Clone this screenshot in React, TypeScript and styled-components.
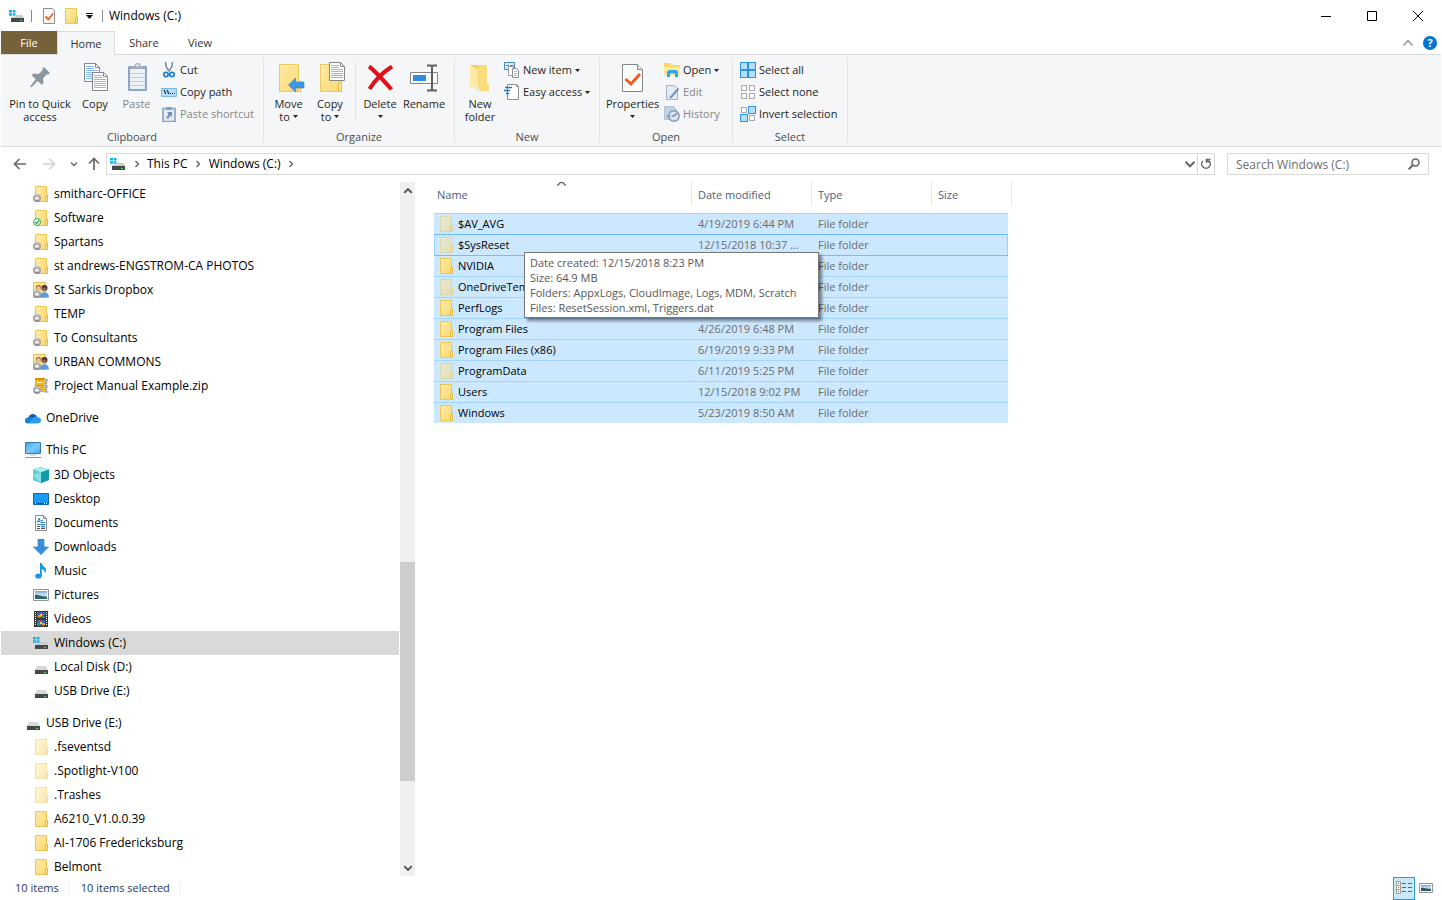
import React from 'react';
import styled, { createGlobalStyle, css } from 'styled-components';

const GlobalStyle = createGlobalStyle`
  * { box-sizing: border-box; }
  html, body, #root { height: 100%; }
  body {
    margin: 0;
    background: #fff;
    color: #000;
    font: 12px/16px "Open Sans", "Noto Sans", sans-serif;
    overflow: hidden;
  }
  button, input { font: inherit; color: inherit; }
  button { background: none; border: 0; padding: 0; margin: 0; }
  a { color: inherit; text-decoration: none; }
  ul { list-style: none; margin: 0; padding: 0; }
  svg { display: block; flex: none; }
`;

/* ---------- shared drawings ---------- */

const HiddenDefs = styled.svg`
  position: absolute;
`;

const Gradients = () => (
  <HiddenDefs width="0" height="0" aria-hidden="true">
    <defs>
      <linearGradient id="folder" x1="0" y1="0" x2="1" y2="1">
        <stop offset="0" stopColor="#ffeba6" />
        <stop offset="1" stopColor="#fbd971" />
      </linearGradient>
      <linearGradient id="screen" x1="0" y1="0" x2="1" y2="1">
        <stop offset="0" stopColor="#3ea3ee" />
        <stop offset="0.5" stopColor="#7ccbfa" />
        <stop offset="1" stopColor="#3fa9f2" />
      </linearGradient>
      <linearGradient id="badge" x1="0" y1="0" x2="0" y2="1">
        <stop offset="0" stopColor="#c4c4c4" />
        <stop offset="1" stopColor="#8a8a8a" />
      </linearGradient>
      <linearGradient id="photo" x1="0" y1="0" x2="0" y2="1">
        <stop offset="0" stopColor="#6fa8dc" />
        <stop offset="0.5" stopColor="#d5e8f5" />
        <stop offset="1" stopColor="#3f7f83" />
      </linearGradient>
    </defs>
  </HiddenDefs>
);

const Svg = ({ s = 16, children }: { s?: number; children: React.ReactNode }) => (
  <svg width={s} height={s} viewBox={`0 0 ${s} ${s}`} fill="none" aria-hidden="true">
    {children}
  </svg>
);

const FolderShape = ({ faded }: { faded?: boolean }) => (
  <g opacity={faded ? 0.5 : 1}>
    <path d="M2.500 .5h11v15h-11z" fill="url(#folder)" stroke="#ecc755" />
    <path d="M12.500 15.500v-5l2-1.500v6.500z" fill="#ffe795" stroke="#e3b93f" />
  </g>
);

const CloudBadge = () => (
  <g>
    <circle cx="4" cy="12" r="4" fill="url(#badge)" />
    <path d="M2.500 13.500h3a.8.8 0 0 0 0-1.600 1.500 1.500 0 0 0-2.900 0 .8.8 0 0 0-.1 1.600z" fill="#fff" />
  </g>
);

type IconName =
  | 'folder' | 'fadedFolder' | 'cloudFolder' | 'syncedFolder' | 'sharedFolder' | 'zip' | 'onedrive'
  | 'pc' | 'cube' | 'desktop' | 'document' | 'download' | 'music' | 'picture' | 'video' | 'winDrive' | 'drive'
  | 'cut' | 'copyPath' | 'pasteShortcut' | 'newItem' | 'easyAccess' | 'open' | 'edit' | 'history'
  | 'selectAll' | 'selectNone' | 'invert' | 'check' | 'details' | 'thumbs';

const Square = ({ x, y, on }: { x: number; y: number; on?: boolean }) => (
  <rect x={x + 0.5} y={y + 0.5} width={on ? 7 : 5} height={on ? 7 : 5} fill={on ? '#b5defb' : '#fff'} stroke={on ? '#2a93e6' : '#a5a7aa'} />
);

const drawings: Record<IconName, React.ReactNode> = {
  folder: <FolderShape />,
  fadedFolder: <FolderShape faded />,
  cloudFolder: <><FolderShape /><CloudBadge /></>,
  syncedFolder: (
    <>
      <FolderShape />
      <circle cx="4" cy="12" r="3.500" fill="#fff" stroke="#27a844" />
      <path d="M2 12l1.500 1.500L6 10.500" stroke="#27a844" strokeWidth="1.300" />
    </>
  ),
  sharedFolder: (
    <>
      <path d="M.5 .5h12v15H.5z" fill="url(#folder)" stroke="#e3c15a" />
      <circle cx="5.500" cy="5.500" r="2.800" fill="#a98752" />
      <circle cx="5.500" cy="6.500" r="2" fill="#e6c49c" />
      <path d="M1 15c0-6 9-6 9 0z" fill="#9fb98a" />
      <circle cx="11.500" cy="6" r="3" fill="#4a3325" />
      <circle cx="11.300" cy="7.300" r="2" fill="#9a6748" />
      <path d="M7 15.500c0-7 9-7 9 0z" fill="#5b9be0" />
      <CloudBadge />
    </>
  ),
  zip: (
    <>
      <path d="M2 0h10v14H2z" fill="#f5b81c" />
      <path d="M2 0h10v2H2zM2 7h10v1H2z" fill="#d78f00" />
      <path d="M4 4h5v1H4z" fill="#fff3c0" />
      <path d="M11 1h4v3h-1v3h1v3h-1v2l2 3h-5l1-3V9h-1V6h1V4h-1z" fill="#c3c6c9" />
      <path d="M13 1v13" stroke="#6e7173" strokeDasharray="1 1" />
      <CloudBadge />
    </>
  ),
  onedrive: (
    <>
      <path d="M3.500 8A4.500 4.500 0 0 1 12 6.500L8 11H1.500z" fill="#0f5eb5" />
      <path d="M1 13a3.200 3.200 0 0 1 1.500-5.600c2.500-.8 4 0 5 1l4.500 4.800H3.500A3 3 0 0 1 1 13z" fill="#1683d8" />
      <path d="M7 9c2-3 5-3 6-1.800 2 .2 3 1.500 3 3a3 3 0 0 1-3 3H4z" fill="#2a9ff0" />
    </>
  ),
  pc: (
    <>
      <path d="M.5 .5h15v11H.5z" fill="url(#screen)" stroke="#2f7db6" />
      <path d="M5 13h6" stroke="#b5c4cf" />
      <path d="M0 15.500h16" stroke="#7e95a6" />
    </>
  ),
  cube: (
    <>
      <path d="M8 0l8 2.500v10.500L8 16 0 13V2.500z" fill="#34bccb" />
      <path d="M8 0l8 2.500L8 5.500 0 2.500z" fill="#a8ebf0" />
      <path d="M0 2.500l8 3V16l-8-3z" fill="#5ed2db" />
      <path d="M8 5.500l8-3V13l-8 3z" fill="#109aac" />
      <path d="M0 8l8-2.500V16z" fill="#b7f0f2" opacity=".5" />
    </>
  ),
  desktop: (
    <>
      <path d="M.5 2.500h15v11H.5z" fill="#1b9bf5" stroke="#0f69b4" />
      <path d="M1 12.500h14" stroke="#0b4f92" />
      <path d="M2 12.500h1M11 12.500h1M13 12.500h1" stroke="#fff" />
    </>
  ),
  document: (
    <>
      <path d="M2.500 .5h8l3 3v12h-11z" fill="#fff" stroke="#8b8e91" />
      <path d="M10.500 .5v3h3" stroke="#8b8e91" />
      <path d="M4 7.500L6 3l1.500 4.500M5 6.500h2M8 5.500h2M8 7.500h4M4 9.500h8" stroke="#2b88c9" />
      <path d="M4 11.500h3M4 13.500h3M8 13.500h4" stroke="#55585b" />
      <path d="M8 10.500h4v2H8z" fill="#4a9ad4" />
    </>
  ),
  download: <path d="M5 0h6v8h4.500L8 15.700.5 8H5z" fill="#378fe0" stroke="#2f7fcc" strokeWidth=".6" />,
  music: (
    <>
      <ellipse cx="5.500" cy="13" rx="3.300" ry="2.600" fill="#1796ee" />
      <path d="M7 0h1.800c.2 3 4.200 4 4.200 7 0 1.500-.7 2.500-1.400 3.500.3-3-1.200-4-2.800-4.500v7H7z" fill="#1796ee" />
    </>
  ),
  picture: (
    <>
      <path d="M.5 2.500h15v11H.5z" fill="#fff" stroke="#8f9498" />
      <path d="M2 4h12v8H2z" fill="url(#photo)" />
      <path d="M2 8c3-1 6 2 12 2v2H2z" fill="#2f6468" />
    </>
  ),
  video: (
    <>
      <path d="M1 0h14v16H1z" fill="#36383b" />
      <path d="M4 1h8v6H4z" fill="#3566b5" />
      <path d="M4 9h8v6H4z" fill="#3566b5" />
      <path d="M5 4h3v2H5zM9 12h3v2H9z" fill="#e8a52e" />
      <path d="M8 2h3v2H8zM6 9h2v2H6z" fill="#d94d33" />
      <path d="M9 5h2v2H9zM4 12h3v2H4z" fill="#3c9b52" />
      <path d="M7 3h2v2H7zM7 11h2v2H7z" fill="#f0d050" />
      <path d="M2.500 1v14M13.500 1v14" stroke="#fff" strokeDasharray="1 1" />
    </>
  ),
  winDrive: (
    <>
      <path d="M0 2h3v2.500H0zM3.700 2h2.800v2.500H3.700zM0 5.200h3v2.500H0zM3.700 5.200h2.800v2.500H3.700z" fill="#13b2ec" />
      <path d="M7 7h6.500l1.500 3H2l1-1.500h4z" fill="#c9cbcc" />
      <path d="M2 10h13v4H2z" fill="#46484a" />
      <path d="M11 12h2v1h-2z" fill="#3ee04a" />
    </>
  ),
  drive: (
    <>
      <path d="M4 7h9l2 4H2z" fill="#d6d7d8" />
      <path d="M2 11h13v4H2z" fill="#46484a" />
      <path d="M11 13h2v1h-2z" fill="#3ee04a" />
    </>
  ),
  cut: (
    <>
      <path d="M4.500 0c0 4 1.500 7 4 9.500M11.500 0c0 4-1.500 7-4 9.500" stroke="#7d8790" strokeWidth="1.500" />
      <circle cx="5" cy="12.500" r="2.200" stroke="#1c7fd0" strokeWidth="1.700" />
      <circle cx="11" cy="12.500" r="2.200" stroke="#1c7fd0" strokeWidth="1.700" />
    </>
  ),
  copyPath: (
    <>
      <path d="M.5 4.500h15v8H.5z" fill="#b4def9" stroke="#7ab8e2" />
      <path d="M3 6l2 4M6 6l2 4" stroke="#17395c" strokeWidth="1.200" />
      <path d="M9 9.500h1M11 9.500h1M13 9.500h1" stroke="#17395c" />
    </>
  ),
  pasteShortcut: (
    <>
      <path d="M2 2.500h12v13H2z" fill="#e3eaf4" stroke="#8ba1c2" strokeWidth="1.600" />
      <path d="M5 1h6v3H5z" fill="#8ba1c2" />
      <path d="M6 6h5v5L9.300 9.300 7 13l-1.500-1 2-4.500z" fill="#6f8ab5" />
    </>
  ),
  newItem: (
    <>
      <path d="M.5 .5h10v7H.5z" fill="#d8ecfa" stroke="#3d87bd" />
      <path d="M2 3.500h3M6 3.500h3" stroke="#3d87bd" />
      <path d="M4.500 4.500h5v9h-5z" fill="#fff" stroke="#9a9da0" />
      <path d="M8.500 6.500h4l2 2v7h-6z" fill="#fff" stroke="#8b8e91" />
      <path d="M10 9.500h3M10 11.500h3M10 13.500h3" stroke="#e3a4a4" />
    </>
  ),
  easyAccess: (
    <>
      <path d="M3.500 .5h9l2 2v13h-11z" fill="#fff" stroke="#8b8e91" />
      <path d="M12.500 .5v2h2" stroke="#8b8e91" />
      <path d="M1 3.500h7M0 6.500h6M2 9.500h3" stroke="#2477b3" strokeWidth="1.400" />
    </>
  ),
  open: (
    <>
      <path d="M0 1h6l1 2h9v11H0z" fill="#fbd864" />
      <path d="M0 5h16v9H0z" fill="#ffe9a0" />
      <path d="M3 15V9.500L5 8h7l2 1.500V15h-3v-3.500H6V15z" fill="#2fa9e4" />
    </>
  ),
  edit: (
    <>
      <path d="M2.500 1.500h8l3 3v11h-11z" fill="#e4ebf5" stroke="#a3b3cc" />
      <path d="M14.500 4.500L8 12l-2 2" stroke="#7f95b8" strokeWidth="2.200" />
    </>
  ),
  history: (
    <>
      <path d="M.5 .5h9l3 3v10H.5z" fill="#c5d2e5" stroke="#b1c1d8" />
      <circle cx="10" cy="10" r="5.200" fill="#dde5f1" stroke="#8197bb" strokeWidth="1.400" />
      <path d="M10 10l3-3M10 10H7.500" stroke="#6e86ae" strokeWidth="1.400" />
      <path d="M2 9.500l2.500 3 2-3z" fill="#8197bb" />
    </>
  ),
  selectAll: <><Square x={0} y={0} on /><Square x={8} y={0} on /><Square x={0} y={8} on /><Square x={8} y={8} on /></>,
  selectNone: <><Square x={1} y={1} /><Square x={9} y={1} /><Square x={1} y={9} /><Square x={9} y={9} /></>,
  invert: <><Square x={1} y={1} /><Square x={8} y={0} on /><Square x={0} y={8} on /><Square x={9} y={9} /></>,
  check: (
    <>
      <path d="M2.500 .5h9l2 2v13h-11z" fill="#fbfbfb" stroke="#8b8e91" />
      <path d="M4.500 8.500l3 3 4.500-6" stroke="#f05a1c" strokeWidth="1.800" />
    </>
  ),
  details: (
    <>
      <path d="M.5 1.500h4v12h-4zM.5 5.500h4M.5 9.500h4" fill="#fff" stroke="#a09a94" />
      <path d="M2 3.500h1M2 7.500h1" stroke="#2f7d6d" />
      <path d="M2 11.500h1" stroke="#d02525" />
      <path d="M6 3.500h4M12 3.500h4M6 7.500h4M12 7.500h4M6 11.500h4M12 11.500h4" stroke="#5b6670" />
    </>
  ),
  thumbs: (
    <>
      <path d="M1.500 3.500h13v9h-13z" fill="#fff" stroke="#8f9498" />
      <path d="M3 5h10v6H3z" fill="url(#photo)" />
      <path d="M3 8c3-1 5 1 10 1v2H3z" fill="#2b5963" />
    </>
  ),
};

const Icon = ({ name }: { name: IconName }) => <Svg>{drawings[name]}</Svg>;

const page = (x: number, y: number) => (
  <g transform={`translate(${x} ${y})`}>
    <path d="M.5 .5h11l4 4v14H.5z" fill="#fff" stroke="#85888b" />
    <path d="M11.500 .5v4h4" stroke="#85888b" />
    <path d="M2 3.500h8M2 5.500h8M2 7.500h12M2 9.500h12M2 11.500h12M2 13.500h12M2 15.500h12" stroke="#86b9ee" />
  </g>
);

const PinIcon = () => (
  <Svg s={32}>
    <path d="M20 5l6 6-1.500 1.500-1.500-.3-4 4 .5 5-1.800 1.600-4-3.800L7.500 25.300 6 24.500l5.700-7.300-4-4 1.800-1.700 5.300.5 4-4-.4-1.500z" fill="#8b979f" />
  </Svg>
);

const CopyIcon = () => (
  <Svg s={32}>
    <g transform="translate(5 1)">{page(0, 0)}{page(8, 9)}</g>
  </Svg>
);

const PasteIcon = () => (
  <Svg s={32}>
    <path d="M8 4h17a1 1 0 0 1 1 1v23a1 1 0 0 1-1 1H8a1 1 0 0 1-1-1V5a1 1 0 0 1 1-1z" fill="#8ea4c8" />
    <path d="M9 7h15v20H9z" fill="#edf2f9" />
    <path d="M9 11.500h15M9 15.500h15M9 19.500h15M9 23.500h15" stroke="#c3cfe1" />
    <path d="M11 7V4h2.500a3 3 0 0 1 6 0H22v3z" fill="#a3aebd" />
    <circle cx="16.500" cy="3.500" r="1.200" fill="#f5f6f7" />
  </Svg>
);

const BigFolder = () => (
  <>
    <path d="M6.500 2.500h19v18l2 2v7h-21z" fill="url(#folder)" stroke="#eccb62" />
    <path d="M24.500 29.500v-8l3-2v10z" fill="#ffe694" stroke="#e5bc45" />
  </>
);

const MoveIcon = () => (
  <Svg s={32}>
    <BigFolder />
    <path d="M15.500 23l7-7v4H31v6h-8.500v4z" fill="#3e97e3" stroke="#2f80cb" strokeWidth=".6" />
  </Svg>
);

const CopyToIcon = () => (
  <Svg s={32}>
    <BigFolder />
    {page(15, 0)}
  </Svg>
);

const DeleteIcon = () => (
  <Svg s={32}>
    <path d="M5 4.500C9 7 22 21 27.500 27.500M28 4.500C21 9 11 18 5.500 27" stroke="#e30f17" strokeWidth="4" />
  </Svg>
);

const RenameIcon = () => (
  <Svg s={32}>
    <path d="M2.500 10.500h27v11h-27z" fill="#fff" stroke="#85888b" />
    <path d="M5 13h13v6H5z" fill="#2e8fe2" />
    <path d="M19 3.500h4l1 1 1-1h4M24 4v24M19 28.500h4l1-1 1 1h4" stroke="#5d6063" strokeWidth="2" />
  </Svg>
);

const NewFolderIcon = () => (
  <Svg s={32}>
    <path d="M7 3h10l6 1v22h-8z" fill="#f3cf6b" />
    <path d="M14 3h9v18l2 2v6h-10z" fill="#fbdc7c" />
    <path d="M6 3l8 5v21l-8-5z" fill="#ffeaa5" />
  </Svg>
);

const PropertiesIcon = () => (
  <Svg s={32}>
    <path d="M5.500 2.500h15l5 5v22h-20z" fill="#fafbfc" stroke="#85888b" />
    <path d="M20.500 2.500v5h5" fill="#e6e8ea" stroke="#85888b" />
    <path d="M8.500 17l5.500 5 9-10" stroke="#f25c1b" strokeWidth="3" />
  </Svg>
);

const Caret = () => (
  <svg width="5" height="3" viewBox="0 0 5 3" aria-hidden="true"><path d="M0 0h5L2.500 3z" fill="#222" /></svg>
);

type Direction = 'up' | 'down' | 'right';
const turns: Record<Direction, number> = { right: 0, down: 90, up: 270 };
const Chevron = ({ to, color = '#666', size = 8, weight = 1.4 }: { to: Direction; color?: string; size?: number; weight?: number }) => (
  <svg width={size} height={size} viewBox="0 0 8 8" fill="none" aria-hidden="true">
    <path d="M2.500 1l3 3-3 3" stroke={color} strokeWidth={weight} transform={`rotate(${turns[to]} 4 4)`} />
  </svg>
);

const Arrow = ({ turn = 0 }: { turn?: number }) => (
  <svg width="14" height="14" viewBox="0 0 14 14" fill="none" stroke="currentColor" strokeWidth="1.700" aria-hidden="true">
    <path d="M13 7H1.500M6.500 2l-5 5 5 5" transform={`rotate(${turn} 7 7)`} />
  </svg>
);

/* ---------- window frame ---------- */

const Window = styled.div`
  height: 100vh;
  padding: 0 1px;
  display: flex;
  flex-direction: column;
  background: #fff;
`;

const TitleBar = styled.header`
  height: 31px;
  flex: none;
  display: flex;
  align-items: center;
  padding-left: 8px;
`;

const QuickButton = styled.button<{ $narrow?: boolean }>`
  width: ${(p) => (p.$narrow ? 14 : 22)}px;
  height: 22px;
  display: flex;
  align-items: center;
  justify-content: center;
`;

const Divider = styled.span`
  width: 1px;
  height: 12px;
  margin: 0 6px;
  background: #888;
`;

const Title = styled.h1`
  margin: 0;
  font-size: 12px;
  font-weight: 400;
  flex: 1;
`;

const WindowButton = styled.button`
  width: 46px;
  height: 31px;
  display: flex;
  align-items: center;
  justify-content: center;
`;

const TabBar = styled.div`
  height: 24px;
  flex: none;
  display: flex;
  border-bottom: 1px solid #dadbdc;
  font-size: 11px;
`;

const Tab = styled.button<{ $kind?: 'file' | 'active'; $width: number }>`
  width: ${(p) => p.$width}px;
  height: 24px;
  color: #333;
  ${(p) => p.$kind === 'file' && css`
    background: #75623a;
    color: #fff;
    height: 23px;
  `}
  ${(p) => p.$kind === 'active' && css`
    background: #f5f6f7;
    border: 1px solid #dadbdc;
    border-bottom: 0;
  `}
`;

const TabTools = styled.div`
  margin-left: auto;
  padding-right: 4px;
  display: flex;
  align-items: center;
  gap: 9px;
`;

const HelpButton = styled.button`
  width: 14px;
  height: 14px;
  border-radius: 7px;
  background: #0173d0;
  color: #fff;
  line-height: 14px;
  font-weight: 700;
`;

/* ---------- ribbon ---------- */

const Ribbon = styled.div`
  flex: none;
  height: 92px;
  display: flex;
  padding: 3px 0;
  background: #f5f6f7;
  border-bottom: 1px solid #dadbdc;
  color: #1e1e1e;
  font-size: 11px;
`;

const Group = styled.section<{ $width: number }>`
  width: ${(p) => p.$width}px;
  flex: none;
  display: flex;
  flex-direction: column;
  border-right: 1px solid #e2e3e4;
`;

const GroupTools = styled.div`
  flex: 1;
  display: flex;
  padding-left: 4px;
`;

const GroupName = styled.h2`
  margin: 0;
  height: 14px;
  font-size: 11px;
  font-weight: 400;
  line-height: 16px;
  text-align: center;
  color: #4b4d50;
`;

const LargeButton = styled.button<{ $width: number }>`
  width: ${(p) => p.$width}px;
  flex: none;
  padding-top: 4px;
  display: flex;
  flex-direction: column;
  align-items: center;
  line-height: 13px;
  white-space: nowrap;
  &:disabled { color: #85878a; }
`;

const LargeLabel = styled.span`
  margin-top: 3px;
`;

const CaretLine = styled.span`
  height: 13px;
  display: flex;
  align-items: center;
  justify-content: center;
  gap: 3px;
`;

const ToolDivider = styled.span`
  width: 1px;
  height: 58px;
  margin: 4px 3px 0 4px;
  background: #e2e3e4;
`;

const SmallTools = styled.div`
  display: flex;
  flex-direction: column;
  align-items: flex-start;
  padding-top: 1px;
`;

const SmallButton = styled.button`
  height: 22px;
  padding: 0 4px 0 3px;
  display: flex;
  align-items: center;
  gap: 3px;
  white-space: nowrap;
  &:disabled { color: #85878a; }
`;

interface LargeProps { width: number; icon: React.ReactNode; lines: string[]; caret?: boolean; disabled?: boolean }
const Large = ({ width, icon, lines, caret, disabled }: LargeProps) => (
  <LargeButton $width={width} disabled={disabled}>
    {icon}
    <LargeLabel>{lines[0]}</LargeLabel>
    {(lines[1] || caret) && <CaretLine>{lines[1]}{caret && <Caret />}</CaretLine>}
  </LargeButton>
);

interface SmallProps { icon: IconName; label: string; caret?: boolean; disabled?: boolean }
const Small = ({ icon, label, caret, disabled }: SmallProps) => (
  <SmallButton disabled={disabled}>
    <Icon name={icon} />
    {label}
    {caret && <Caret />}
  </SmallButton>
);

/* ---------- address row ---------- */

const AddressRow = styled.div`
  flex: none;
  height: 35px;
  padding: 6px 12px 7px 6px;
  display: flex;
`;

const NavButton = styled.button<{ $width: number }>`
  width: ${(p) => p.$width}px;
  display: flex;
  align-items: center;
  justify-content: center;
  color: #6a6a6a;
  &:disabled { color: #d4d4d4; }
`;

const AddressBox = styled.div`
  flex: 1;
  min-width: 0;
  display: flex;
  align-items: center;
  padding-left: 3px;
  border: 1px solid #d9d9d9;
`;

const Crumbs = styled.nav`
  flex: 1;
  min-width: 0;
  display: flex;
  align-items: center;
`;

const Crumb = styled.button`
  height: 20px;
  white-space: nowrap;
`;

const CrumbMark = styled.span`
  width: 21px;
  display: flex;
  justify-content: center;
`;

const BoxButton = styled.button<{ $ruled?: boolean }>`
  width: ${(p) => (p.$ruled ? 17 : 15)}px;
  height: 20px;
  display: flex;
  align-items: center;
  justify-content: center;
  border-left: ${(p) => (p.$ruled ? '1px solid #d9d9d9' : '0')};
`;

const SearchBox = styled.form`
  width: 202px;
  margin-left: 12px;
  display: flex;
  align-items: center;
  border: 1px solid #d9d9d9;
`;

const SearchInput = styled.input`
  flex: 1;
  min-width: 0;
  height: 20px;
  padding: 0 0 0 8px;
  border: 0;
  outline: 0;
  background: none;
  &::placeholder { color: #6d6d6d; opacity: 1; }
`;

const SearchButton = styled.button`
  width: 28px;
  height: 20px;
  display: flex;
  align-items: center;
  justify-content: center;
`;

/* ---------- folder tree ---------- */

const Body = styled.div`
  flex: 1;
  min-height: 0;
  display: flex;
`;

const Tree = styled.nav`
  width: 398px;
  flex: none;
  overflow: hidden;
  display: flex;
  flex-direction: column;
  gap: 8px;
`;

const Branch = styled.ul<{ $spaced?: boolean }>`
  padding-top: ${(p) => (p.$spaced ? 1 : 0)}px;
`;

const TreeLink = styled.a<{ $root?: boolean; $selected?: boolean }>`
  height: 24px;
  display: flex;
  align-items: center;
  gap: 5px;
  padding-left: ${(p) => (p.$root ? 24 : 32)}px;
  background: ${(p) => (p.$selected ? '#d9d9d9' : 'none')};
  white-space: nowrap;
`;

const ScrollBar = styled.div`
  width: 15px;
  flex: none;
  margin-left: 1px;
  display: flex;
  flex-direction: column;
  background: #f0f0f0;
`;

const ScrollButton = styled.button`
  height: 17px;
  flex: none;
  display: flex;
  align-items: center;
  justify-content: center;
`;

const ScrollPart = styled.div<{ $share: number; $thumb?: boolean }>`
  flex: ${(p) => p.$share} 1 0;
  background: ${(p) => (p.$thumb ? '#cdcdcd' : 'none')};
`;

interface Node { name: string; icon: IconName; selected?: boolean }
interface TreeGroup { root?: Node; items: Node[]; spaced?: boolean }

const tree: TreeGroup[] = [
  {
    items: [
      { name: 'smitharc-OFFICE', icon: 'cloudFolder' },
      { name: 'Software', icon: 'syncedFolder' },
      { name: 'Spartans', icon: 'cloudFolder' },
      { name: 'st andrews-ENGSTROM-CA PHOTOS', icon: 'cloudFolder' },
      { name: 'St Sarkis Dropbox', icon: 'sharedFolder' },
      { name: 'TEMP', icon: 'cloudFolder' },
      { name: 'To Consultants', icon: 'cloudFolder' },
      { name: 'URBAN COMMONS', icon: 'sharedFolder' },
      { name: 'Project Manual Example.zip', icon: 'zip' },
    ],
  },
  { root: { name: 'OneDrive', icon: 'onedrive' }, items: [] },
  {
    root: { name: 'This PC', icon: 'pc' },
    spaced: true,
    items: [
      { name: '3D Objects', icon: 'cube' },
      { name: 'Desktop', icon: 'desktop' },
      { name: 'Documents', icon: 'document' },
      { name: 'Downloads', icon: 'download' },
      { name: 'Music', icon: 'music' },
      { name: 'Pictures', icon: 'picture' },
      { name: 'Videos', icon: 'video' },
      { name: 'Windows (C:)', icon: 'winDrive', selected: true },
      { name: 'Local Disk (D:)', icon: 'drive' },
      { name: 'USB Drive (E:)', icon: 'drive' },
    ],
  },
  {
    root: { name: 'USB Drive (E:)', icon: 'drive' },
    items: [
      { name: '.fseventsd', icon: 'fadedFolder' },
      { name: '.Spotlight-V100', icon: 'fadedFolder' },
      { name: '.Trashes', icon: 'fadedFolder' },
      { name: 'A6210_V1.0.0.39', icon: 'folder' },
      { name: 'AI-1706 Fredericksburg', icon: 'folder' },
      { name: 'Belmont', icon: 'folder' },
    ],
  },
];

/* ---------- file list ---------- */

const Files = styled.main`
  flex: 1;
  min-width: 0;
  padding-left: 19px;
  overflow: hidden;
`;

const FileTable = styled.table`
  display: block;
  border-spacing: 0;
  font-size: 11px;
`;

const HeadRow = styled.tr`
  display: grid;
  grid-template-columns: 258px 120px 120px 80px;
  width: 578px;
  margin-bottom: 7px;
`;

const HeadCell = styled.th`
  position: relative;
  height: 24px;
  padding: 5px 0 0 6px;
  border-right: 1px solid #e5e5e5;
  font-weight: 400;
  text-align: left;
  color: #4c607a;
  &:first-child { padding-left: 3px; }
`;

const SortMark = styled.span`
  position: absolute;
  top: -4px;
  left: 50%;
  margin-left: -7px;
`;

const FileRow = styled.tr<{ $focused?: boolean }>`
  position: relative;
  display: grid;
  grid-template-columns: 258px 120px 120px 76px;
  width: 574px;
  height: 21px;
  background: #cce8ff;
  box-shadow: inset 0 1px #a3d5ff;
  ${(p) => p.$focused && css`
    box-shadow: inset 0 1px #73bbfa, inset 1px 0 #99d1ff, inset -1px 0 #99d1ff, 0 1px #73bbfa;
    z-index: 1;
  `}
`;

const FileCell = styled.td`
  padding: 3px 0 0 6px;
  line-height: 16px;
  white-space: nowrap;
  color: #6d6d6d;
`;

const NameCell = styled(FileCell)`
  display: flex;
  align-items: center;
  gap: 4px;
  padding: 1px 0 0 4px;
  color: #000;
`;

const Tooltip = styled.div`
  position: absolute;
  left: 90px;
  top: 18px;
  min-width: 295px;
  padding: 2px 8px 2px 5px;
  background: #fff;
  border: 1px solid #767676;
  box-shadow: 3px 3px 3px rgba(0, 0, 0, 0.45);
  color: #575757;
  line-height: 15px;
`;

interface FileItem { name: string; date: string; faded?: boolean; tip?: string[] }
const files: FileItem[] = [
  { name: '$AV_AVG', date: '4/19/2019 6:44 PM', faded: true },
  {
    name: '$SysReset',
    date: '12/15/2018 10:37 ...',
    faded: true,
    tip: [
      'Date created: 12/15/2018 8:23 PM',
      'Size: 64.9 MB',
      'Folders: AppxLogs, CloudImage, Logs, MDM, Scratch',
      'Files: ResetSession.xml, Triggers.dat',
    ],
  },
  { name: 'NVIDIA', date: '' },
  { name: 'OneDriveTemp', date: '', faded: true },
  { name: 'PerfLogs', date: '' },
  { name: 'Program Files', date: '4/26/2019 6:48 PM' },
  { name: 'Program Files (x86)', date: '6/19/2019 9:33 PM' },
  { name: 'ProgramData', date: '6/11/2019 5:25 PM', faded: true },
  { name: 'Users', date: '12/15/2018 9:02 PM' },
  { name: 'Windows', date: '5/23/2019 8:50 AM' },
];

/* ---------- status bar ---------- */

const StatusBar = styled.footer`
  flex: none;
  height: 24px;
  display: flex;
  align-items: center;
  padding: 0 4px 0 14px;
  color: #1e395b;
  font-size: 11px;
`;

const StatusText = styled.span`
  padding-right: 10px;
  margin-right: 11px;
  border-right: 1px solid #f4f4f4;
`;

const Views = styled.div`
  margin-left: auto;
  display: flex;
`;

const ViewButton = styled.button<{ $on?: boolean }>`
  width: 22px;
  height: 23px;
  display: flex;
  align-items: center;
  justify-content: center;
  border: 1px solid ${(p) => (p.$on ? '#26a0da' : 'transparent')};
  background: ${(p) => (p.$on ? '#cbe8f6' : 'none')};
`;

export default function App() {
  return (
    <Window>
      <GlobalStyle />
      <Gradients />

      <TitleBar>
        <Icon name="winDrive" />
        <Divider />
        <QuickButton aria-label="Properties"><Icon name="check" /></QuickButton>
        <QuickButton aria-label="New folder"><Icon name="folder" /></QuickButton>
        <QuickButton $narrow aria-label="Customize Quick Access Toolbar">
          <svg width="7" height="6" viewBox="0 0 7 6" aria-hidden="true"><path d="M0 0h7v1H0zM0 2h7L3.500 6z" fill="#111" /></svg>
        </QuickButton>
        <Divider />
        <Title>Windows (C:)</Title>
        <WindowButton aria-label="Minimize">
          <svg width="10" height="10" stroke="#000" fill="none"><path d="M0 5.500h10" /></svg>
        </WindowButton>
        <WindowButton aria-label="Maximize">
          <svg width="10" height="10" stroke="#000" fill="none"><path d="M.5 .5h9v9h-9z" /></svg>
        </WindowButton>
        <WindowButton aria-label="Close">
          <svg width="10" height="10" stroke="#000" fill="none"><path d="M0 0l10 10M10 0L0 10" /></svg>
        </WindowButton>
      </TitleBar>

      <TabBar>
        <Tab $kind="file" $width={56}>File</Tab>
        <Tab $kind="active" $width={58}>Home</Tab>
        <Tab $width={58}>Share</Tab>
        <Tab $width={54}>View</Tab>
        <TabTools>
          <button aria-label="Minimize the Ribbon"><Chevron to="up" color="#8a8a8a" size={12} weight={0.9} /></button>
          <HelpButton aria-label="Help">?</HelpButton>
        </TabTools>
      </TabBar>

      <Ribbon>
        <Group $width={263}>
          <GroupTools>
            <Large width={70} icon={<PinIcon />} lines={['Pin to Quick', 'access']} />
            <Large width={40} icon={<CopyIcon />} lines={['Copy']} />
            <Large width={43} icon={<PasteIcon />} lines={['Paste']} disabled />
            <SmallTools>
              <Small icon="cut" label="Cut" />
              <Small icon="copyPath" label="Copy path" />
              <Small icon="pasteShortcut" label="Paste shortcut" disabled />
            </SmallTools>
          </GroupTools>
          <GroupName>Clipboard</GroupName>
        </Group>
        <Group $width={191}>
          <GroupTools>
            <Large width={41} icon={<MoveIcon />} lines={['Move', 'to']} caret />
            <Large width={42} icon={<CopyToIcon />} lines={['Copy', 'to']} caret />
            <ToolDivider />
            <Large width={42} icon={<DeleteIcon />} lines={['Delete']} caret />
            <Large width={46} icon={<RenameIcon />} lines={['Rename']} />
          </GroupTools>
          <GroupName>Organize</GroupName>
        </Group>
        <Group $width={145}>
          <GroupTools>
            <Large width={42} icon={<NewFolderIcon />} lines={['New', 'folder']} />
            <SmallTools>
              <Small icon="newItem" label="New item" caret />
              <Small icon="easyAccess" label="Easy access" caret />
            </SmallTools>
          </GroupTools>
          <GroupName>New</GroupName>
        </Group>
        <Group $width={133}>
          <GroupTools>
            <Large width={57} icon={<PropertiesIcon />} lines={['Properties']} caret />
            <SmallTools>
              <Small icon="open" label="Open" caret />
              <Small icon="edit" label="Edit" disabled />
              <Small icon="history" label="History" disabled />
            </SmallTools>
          </GroupTools>
          <GroupName>Open</GroupName>
        </Group>
        <Group $width={115}>
          <GroupTools>
            <SmallTools>
              <Small icon="selectAll" label="Select all" />
              <Small icon="selectNone" label="Select none" />
              <Small icon="invert" label="Invert selection" />
            </SmallTools>
          </GroupTools>
          <GroupName>Select</GroupName>
        </Group>
      </Ribbon>

      <AddressRow>
        <NavButton $width={26} aria-label="Back"><Arrow /></NavButton>
        <NavButton $width={32} disabled aria-label="Forward"><Arrow turn={180} /></NavButton>
        <NavButton $width={17} aria-label="Recent locations"><Chevron to="down" /></NavButton>
        <NavButton $width={24} aria-label="Up"><Arrow turn={90} /></NavButton>
        <AddressBox>
          <Crumbs aria-label="Address">
            <Icon name="winDrive" />
            <CrumbMark><Chevron to="right" /></CrumbMark>
            <Crumb>This PC</Crumb>
            <CrumbMark><Chevron to="right" /></CrumbMark>
            <Crumb>Windows (C:)</Crumb>
            <CrumbMark><Chevron to="right" /></CrumbMark>
          </Crumbs>
          <BoxButton aria-label="Previous locations"><Chevron to="down" size={12} weight={1.3} /></BoxButton>
          <BoxButton $ruled aria-label="Refresh">
            <svg width="12" height="12" viewBox="0 0 12 12" fill="none" stroke="#666" strokeWidth="1.500" aria-hidden="true">
              <path d="M2.800 3a4.300 4.300 0 1 0 6.400 0M6.500 5V1.500h4M6.500 1.500l3 3" />
            </svg>
          </BoxButton>
        </AddressBox>
        <SearchBox role="search">
          <SearchInput type="search" aria-label="Search Windows (C:)" placeholder="Search Windows (C:)" />
          <SearchButton type="button" aria-label="Search">
            <svg width="12" height="12" viewBox="0 0 12 12" fill="none" stroke="#666" strokeWidth="1.500" aria-hidden="true">
              <circle cx="7.500" cy="4.500" r="3.500" />
              <path d="M5 7L.7 11.300" strokeWidth="2" />
            </svg>
          </SearchButton>
        </SearchBox>
      </AddressRow>

      <Body>
        <Tree aria-label="Folders">
          {tree.map((group, g) => (
            <div key={g}>
              {group.root && <TreeLink href="#" $root><Icon name={group.root.icon} />{group.root.name}</TreeLink>}
              {group.items.length > 0 && (
                <Branch $spaced={group.spaced}>
                  {group.items.map((item) => (
                    <li key={item.name}>
                      <TreeLink href="#" $selected={item.selected}><Icon name={item.icon} />{item.name}</TreeLink>
                    </li>
                  ))}
                </Branch>
              )}
            </div>
          ))}
        </Tree>
        <ScrollBar>
          <ScrollButton aria-label="Scroll up"><Chevron to="up" color="#505050" size={10} weight={1.5} /></ScrollButton>
          <ScrollPart $share={364} />
          <ScrollPart $share={219} $thumb />
          <ScrollPart $share={78} />
          <ScrollButton aria-label="Scroll down"><Chevron to="down" color="#505050" size={10} weight={1.5} /></ScrollButton>
        </ScrollBar>

        <Files>
          <FileTable>
            <thead>
              <HeadRow>
                <HeadCell>Name<SortMark><Chevron to="up" color="#555" size={11} weight={0.9} /></SortMark></HeadCell>
                <HeadCell>Date modified</HeadCell>
                <HeadCell>Type</HeadCell>
                <HeadCell>Size</HeadCell>
              </HeadRow>
            </thead>
            <tbody>
              {files.map((file) => (
                <FileRow key={file.name} $focused={!!file.tip}>
                  <NameCell>
                    <Icon name={file.faded ? 'fadedFolder' : 'folder'} />
                    {file.name}
                    {file.tip && <Tooltip role="tooltip">{file.tip.map((line) => <div key={line}>{line}</div>)}</Tooltip>}
                  </NameCell>
                  <FileCell>{file.date}</FileCell>
                  <FileCell>File folder</FileCell>
                  <FileCell />
                </FileRow>
              ))}
            </tbody>
          </FileTable>
        </Files>
      </Body>

      <StatusBar>
        <StatusText>10 items</StatusText>
        <StatusText>10 items selected</StatusText>
        <Views>
          <ViewButton $on aria-label="Details view"><Icon name="details" /></ViewButton>
          <ViewButton aria-label="Large thumbnails view"><Icon name="thumbs" /></ViewButton>
        </Views>
      </StatusBar>
    </Window>
  );
}
